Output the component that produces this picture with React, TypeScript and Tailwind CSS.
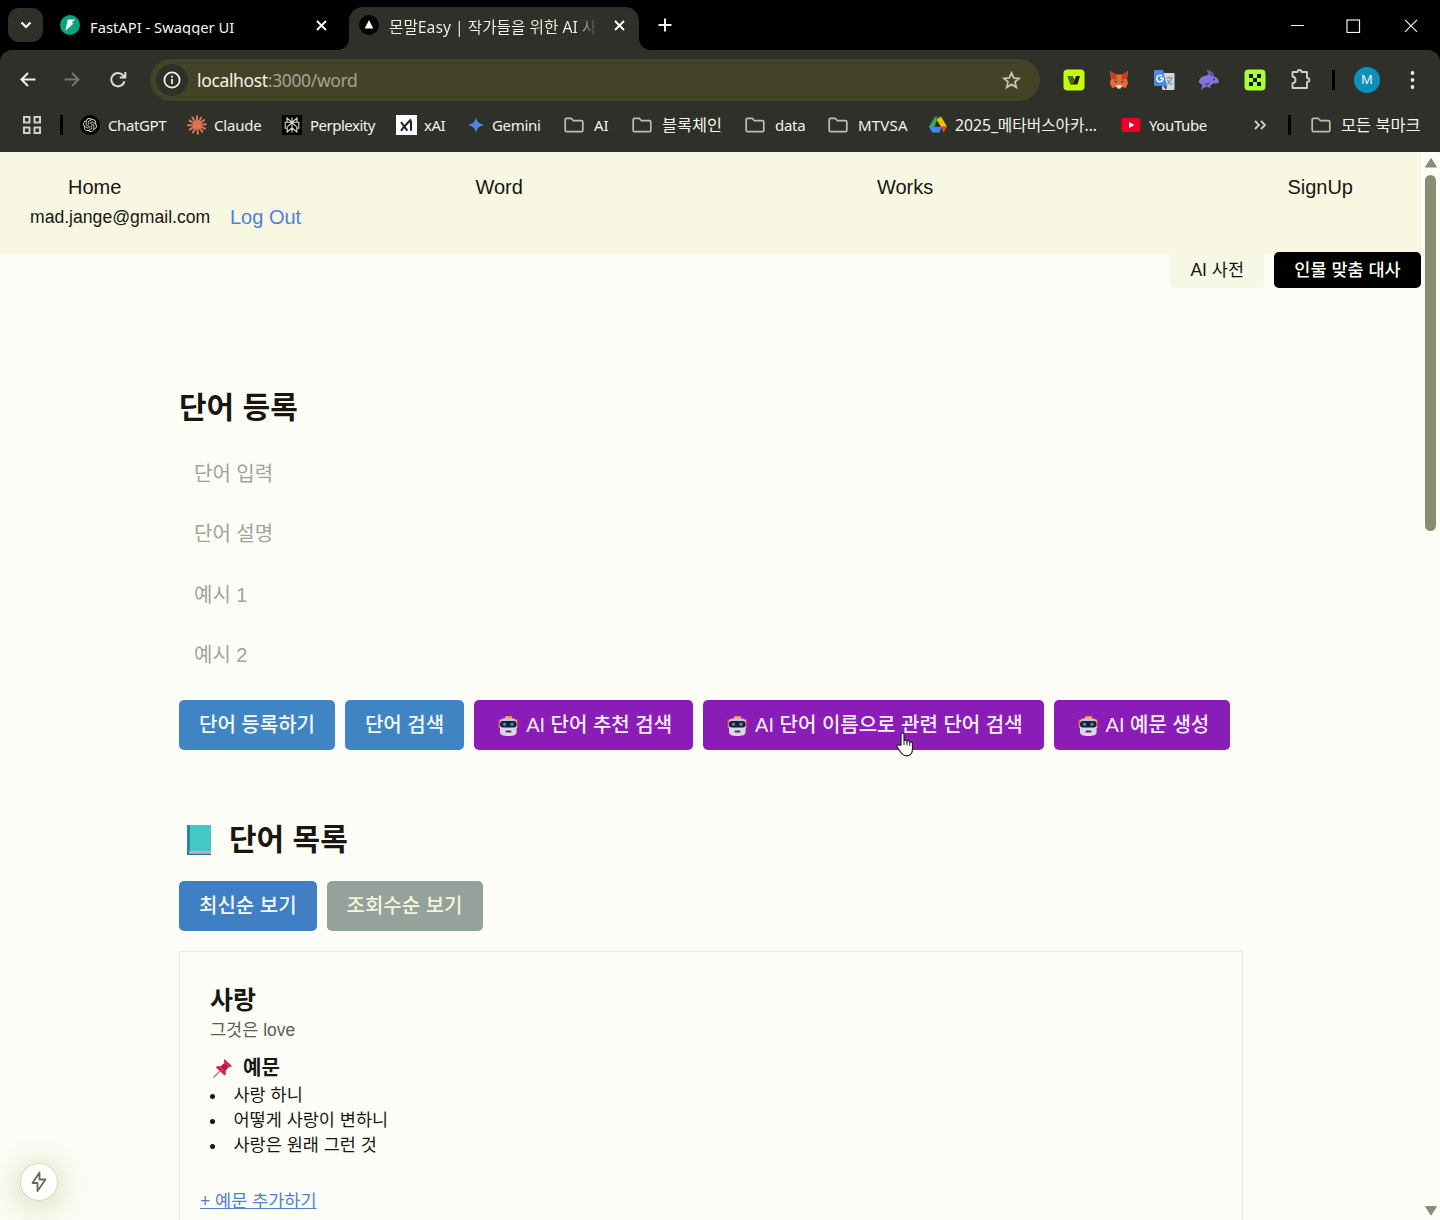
import React from "react";
import { SiOpenai } from "react-icons/si";

const UI = "font-['Noto_Sans','Noto_Sans_CJK_KR',sans-serif]";
const PAGE = "font-['Liberation_Sans','Noto_Sans_CJK_KR',sans-serif]";

function Folder() {
  return (
    <svg width="20" height="20" viewBox="0 0 20 20" fill="none" stroke="#bdbdb4" strokeWidth="1.7">
      <path d="M1.2 4.6c0-.8.6-1.3 1.3-1.3h4.7l2.2 2.4h8c.8 0 1.4.6 1.4 1.3v8.3c0 .8-.6 1.4-1.4 1.4H2.6c-.8 0-1.4-.6-1.4-1.4z" />
    </svg>
  );
}

function Burst() {
  return (
    <svg width="20" height="20" viewBox="0 0 20 20" stroke="#d97757" strokeWidth="2" strokeLinecap="round">
      <path d="M10 10V1.2M10 10l4.2-7.4M10 10l7.3-5M10 10l8.8-.8M10 10l8 3.6M10 10l5.2 6.6M10 10l.9 8.8M10 10l-4 7.4M10 10l-7.3 4.6M10 10L1 10.3M10 10L2.6 5.6M10 10L5.4 2.3" />
    </svg>
  );
}

function Perplexity() {
  return (
    <svg width="20" height="20" viewBox="0 0 20 20" fill="none" stroke="#d8d8ce" strokeWidth="1.1">
      <rect width="20" height="20" fill="#050505" stroke="none" />
      <path d="M10 2.500v15M5 3v4.300h10V3l-5 4.500zM5 7.300H3.200v6h2M15 7.300h1.800v6h-2M10 7.500l-4.800 4.400V17l4.800-4.200 4.800 4.200v-5.100z" />
    </svg>
  );
}

function XaiLogo() {
  return (
    <svg className="shrink-0" width="21" height="20" viewBox="0 0 21 20">
      <rect width="21" height="20" fill="#fff" />
      <path d="M5 7l6.300 8.600M5 15.800l2.700-3.600M9 10.800l6-6.300M15 6v9.800" fill="none" stroke="#222" strokeWidth="2.100" />
    </svg>
  );
}

function Gemini() {
  return (
    <svg width="20" height="20" viewBox="0 0 20 20">
      <defs>
        <linearGradient id="gem" x1="0" x2="1">
          <stop offset="0" stopColor="#8a72c0" />
          <stop offset=".55" stopColor="#4a86e0" />
          <stop offset="1" stopColor="#4fa0e8" />
        </linearGradient>
      </defs>
      <path d="M10 2c.9 4.800 3.200 7.100 8 8-4.800.9-7.100 3.200-8 8-.9-4.800-3.200-7.100-8-8 4.800-.9 7.100-3.200 8-8z" fill="url(#gem)" />
    </svg>
  );
}

function Drive() {
  return (
    <svg width="20" height="20" viewBox="0 0 20 20">
      <path d="M6.800 1.800h3.400L4.500 17.200 1 11.800z" fill="#34a853" />
      <path d="M6.800 1.800h6.400L10 7.500z" fill="#188038" />
      <path d="M13.200 1.800L19 11.800h-6.100L8.600 4.500z" fill="#fbbc04" />
      <path d="M7 11.800h6.500l-1.800 5.700H4.500L1 11.800z" fill="#4285f4" />
      <path d="M12.900 11.800H19l-3.400 5.700z" fill="#ea4335" />
      <path d="M10 7.600l2.500 4.200h-5z" fill="#303029" />
    </svg>
  );
}

function YouTube() {
  return (
    <svg width="20" height="20" viewBox="0 0 20 20">
      <rect x=".5" y="3" width="19" height="14" rx="2" fill="#f00028" />
      <path d="M8 7l5.500 3L8 13z" fill="#fff" />
    </svg>
  );
}

function Bookmark({ icon, label, w, text = "" }: { icon: React.ReactNode; label: string; w: string; text?: string }) {
  return (
    <div className={`flex shrink-0 items-center ${w}`}>
      <span className="flex w-5 shrink-0 justify-center">{icon}</span>
      <span className={`ml-2 whitespace-nowrap ${text}`}>{label}</span>
    </div>
  );
}

function X() {
  return <svg className="shrink-0" width="11" height="11" stroke="#fff" strokeWidth="1.900"><path d="M1 1l9 9M10 1l-9 9" /></svg>;
}

function TabBar() {
  return (
    <div className="flex h-[50px] items-start bg-black text-[#f4f4e8]">
      <div className="ml-2 mt-2 flex h-[34px] w-[35px] items-center justify-center rounded-[11px] bg-[#30302a]">
        <svg width="12" height="8" viewBox="0 0 12 8" fill="none" stroke="#fff" strokeWidth="2.200"><path d="M1.500 1.500L6 6l4.500-4.500" /></svg>
      </div>
      <div className="ml-[17px] mt-[15px] flex w-[289px] items-start">
        <svg className="shrink-0" width="20" height="20" viewBox="0 0 20 20"><circle cx="10" cy="10" r="10" fill="#0ba37f" /><path d="M7.800 4.500h7.200l-3.800 3.700h2.600L5.500 15.800l1-5z" fill="#fff" /></svg>
        <span className="ml-[10px] mt-[2px] h-[18px] w-[226px] shrink-0 overflow-hidden whitespace-nowrap text-[14.750px] leading-[21px]">FastAPI - Swagger UI</span>
        <span className="mt-[5px]"><X /></span>
      </div>
      <div className="relative h-[50px] w-[290px]">
        <div className="mt-[7px] flex h-[43px] items-start rounded-t-[14px] bg-[#30302a] pl-[10px] pt-2">
          <svg className="shrink-0" width="20" height="20" viewBox="0 0 20 20"><circle cx="10" cy="10" r="10" fill="#000" /><path d="M10 5l4.300 8.500H5.700z" fill="#fff" /></svg>
          <span className="ml-[10px] mt-[1px] h-[22px] w-[209px] shrink-0 overflow-hidden whitespace-nowrap bg-gradient-to-r from-[#f4f4e8] from-90% to-[#30302a] bg-clip-text text-[15.700px] leading-[22px] text-transparent">몬말Easy | 작가들을 위한 AI 사</span>
          <span className="ml-[16px] mt-[5px]"><X /></span>
        </div>
        <svg className="absolute -left-[12px] bottom-0" width="12" height="12"><path d="M12 0v12H0C7 12 12 7 12 0z" fill="#30302a" /></svg>
        <svg className="absolute -right-[12px] bottom-0" width="12" height="12"><path d="M0 0v12h12C5 12 0 7 0 0z" fill="#30302a" /></svg>
      </div>
      <svg className="ml-[19px] mt-[18px]" width="14" height="14" stroke="#f4f4e8" strokeWidth="2"><path d="M7 .5v13M.5 7h13" /></svg>
      <svg className="ml-auto mr-[22px] mt-[19px]" width="128" height="14" fill="none" stroke="#f4f4ec" strokeWidth="1.200"><path d="M1 6.500h13M115 .8l12 12M127 .8l-12 12" /><rect x="57" y="1" width="12.500" height="12.500" /></svg>
    </div>
  );
}

function Toolbar() {
  return (
    <div className="bg-black">
      <div className="h-[102px] rounded-t-[12px] bg-[#30302a] text-[#f4f4e8]">
        <div className="flex h-[60px] items-center">
          <svg className="ml-5" width="16" height="16" fill="none" stroke="#f0f0e6" strokeWidth="2"><path d="M15.500 7.500H1.500M8 1L1.500 7.500 8 14" /></svg>
          <svg className="ml-[28px]" width="16" height="16" fill="none" stroke="#77776c" strokeWidth="2"><path d="M.5 7.500h14M8 1l6.500 6.500L8 14" /></svg>
          <svg className="ml-[29px]" width="18" height="18" viewBox="0 0 18 18" fill="none" stroke="#deded2" strokeWidth="2"><path d="M15.500 10.200A6.700 6.700 0 1 1 14 4.200l2 2M16.300 1v5.500h-5.500" /></svg>
          <div className="ml-[23px] flex h-[42px] w-[890px] items-center rounded-full bg-[#434328] pl-[6px] pr-[19px]">
            <span className="flex size-8 items-center justify-center rounded-full bg-[#30302a]">
              <svg width="18" height="18" viewBox="0 0 18 18" fill="none" stroke="#f0f0e6" strokeWidth="1.800"><circle cx="9" cy="9" r="7.600" /><path d="M9 8v5M9 4.700v2" /></svg>
            </span>
            <span className="ml-[9px] text-[17.500px] tracking-[-0.350px] text-[#a4a494]"><span className="text-[#f4f4e8]">localhost</span>:3000/word</span>
            <svg className="ml-auto" width="19" height="19" viewBox="0 0 19 19" fill="none" stroke="#c4c4b8" strokeWidth="1.800"><path d="M9.500 1.900l2.200 5 5.400.5-4.100 3.500 1.300 5.400-4.800-2.900-4.800 2.900L6 10.900 1.900 7.400l5.400-.5z" /></svg>
          </div>
          <svg className="ml-[23px]" width="22" height="22" viewBox="0 0 22 22"><rect x=".5" y=".5" width="21" height="21" rx="4" fill="#c4ff0a" /><path d="M4.500 7h5l2 4 1.500-4H17l-2.500 8.500h-7z" fill="#171d08" /><path d="M4.500 7h5l2.500 5-3 3.500H7.500z" fill="#536600" /></svg>
          <svg className="ml-[24px]" width="20" height="20" viewBox="0 0 20 20"><path d="M1 1l6 3.500h6L19 1l-1 8 1 4-2 5-4-1-3 2-3-2-4 1-2-5 1-4z" fill="#e86a36" /><path d="M1 1l6 3.500 1 5L2 9zM19 1l-6 3.500-1 5L18 9z" fill="#c63d20" /><path d="M7 15h6l-1.500 3.500h-3z" fill="#eadbd0" /><path d="M5 10.500l3 1-1 1.500zM15 10.500l-3 1 1 1.500z" fill="#203050" /></svg>
          <svg className="ml-[24px]" width="22" height="22" viewBox="0 0 22 22"><rect x="9" y="4" width="12.500" height="17" rx="1" fill="#d5d8d8" /><path d="M13 9h7M16.500 7.500V9M18.500 9c-.5 4-3 5.500-5 6.500M14.500 11c1 2 3 4 5 4.500" stroke="#78909c" strokeWidth="1.200" fill="none" /><path d="M1.500 1H10l4 16H2.500C1.500 17 1 16.500 1 15.500V2z" fill="#4d88e8" /><path d="M10 17h4l-1 4z" fill="#3450a0" /><path d="M9 7.200A3.200 3.200 0 1 0 10 9.300H7" stroke="#fff" strokeWidth="1.500" fill="none" /></svg>
          <svg className="ml-[23px]" width="22" height="22" viewBox="0 0 22 22"><path d="M.8 13.500C1 9.500 4 7 8 6.800 12 5 10.500 3 8 1c5 0 8 3 8 6.500 3 .5 4 2.500 5.200 5.500-2 2-4 1.500-6.200 1.500l-3 2.500 1 2c-3-1-5-1.500-7-.5l-3 2.500 1.500-5z" fill="#8276d8" /><path d="M8 1c4 .5 7 3 7.500 6.500L12 7c0-2-1-4-4-6zM6 14.500l7-1.500-4 4.500z" fill="#5d4fb0" /><circle cx="16" cy="10.500" r="1" fill="#302c60" /></svg>
          <svg className="ml-[24px]" width="22" height="22" viewBox="0 0 22 22"><rect x=".5" y=".5" width="21" height="21" rx="4" fill="#aaff30" /><path d="M5 5h4v4H5zM13 5h4v4h-4zM9 9h4v4H9zM5 13h4v4H5zM13 13h4v4h-4z" fill="#101607" /></svg>
          <svg className="ml-[23px]" width="24" height="24" viewBox="0 0 24 24" fill="none" stroke="#d0d0c6" strokeWidth="1.900" strokeLinejoin="round"><path d="M3.500 4h5c0-2.700 4-2.700 4 0H18v6c3.200 0 3.200 4 0 4v6H3.500v-4.500c4-.8 4-6.200 0-7z" /></svg>
          <span className="ml-[19px] h-5 w-[3px] bg-black" />
          <span className="ml-[19px] flex size-[26px] items-center justify-center rounded-full bg-[#0d90bd] text-[13px]">M</span>
          <svg className="ml-[30px]" width="5" height="18" fill="#e6e6dc"><circle cx="2.500" cy="2" r="1.900" /><circle cx="2.500" cy="9" r="1.900" /><circle cx="2.500" cy="16" r="1.900" /></svg>
        </div>
        <div className="flex h-[30px] items-center text-[15px] leading-[24px]">
          <svg className="ml-[23px] shrink-0" width="18" height="18" fill="none" stroke="#d0d0c6" strokeWidth="2"><path d="M1 1h5.500v5.500H1zM11.500 1H17v5.500h-5.500zM1 11.500h5.500V17H1zM11.500 11.500H17V17h-5.500z" /></svg>
          <span className="ml-[19px] mr-[17px] h-5 w-[3px] shrink-0 bg-black" />
          <Bookmark w="w-[107px]" label="ChatGPT" text="tracking-[-0.400px]" icon={<span className="flex size-5 items-center justify-center rounded-full bg-black"><SiOpenai size={14} color="#d4d4ca" /></span>} />
          <Bookmark w="w-[95px]" label="Claude" text="relative -left-px tracking-[-0.200px]" icon={<Burst />} />
          <Bookmark w="w-[114px]" label="Perplexity" text="tracking-[-0.500px]" icon={<Perplexity />} />
          <Bookmark w="w-[70px]" label="xAI" text="tracking-[-0.500px]" icon={<XaiLogo />} />
          <Bookmark w="w-[98px]" label="Gemini" text="relative -left-[2px] tracking-[-0.300px]" icon={<Gemini />} />
          <Bookmark w="w-[68px]" label="AI" text="pl-[2px]" icon={<Folder />} />
          <Bookmark w="w-[113px]" label="블록체인" text="pl-[2px] text-[16.300px]" icon={<Folder />} />
          <Bookmark w="w-[83px]" label="data" text="pl-[2px] tracking-[-0.300px]" icon={<Folder />} />
          <Bookmark w="w-[100px]" label="MTVSA" text="pl-[2px] tracking-[0.200px]" icon={<Folder />} />
          <Bookmark w="w-[193px]" label="2025_메타버스아카..." text="relative -left-px text-[15.700px]" icon={<Drive />} />
          <Bookmark w="w-[133px]" label="YouTube" text="tracking-[-0.400px]" icon={<YouTube />} />
          <svg className="shrink-0" width="12" height="10" fill="none" stroke="#d0d0c6" strokeWidth="1.800"><path d="M1 1l4 4-4 4M7 1l4 4-4 4" /></svg>
          <span className="ml-[22px] mr-[20px] h-5 w-[3px] shrink-0 bg-black" />
          <Bookmark w="w-[112px]" label="모든 북마크" text="pl-[2px] text-[16.400px]" icon={<Folder />} />
        </div>
      </div>
    </div>
  );
}

function Robot() {
  return (
    <svg className="mr-[5px] mt-[2px] shrink-0" width="27" height="22" viewBox="-1 0 27 22">
      <rect x="3" y="4" width="2.500" height="9" rx="1" fill="#d82858" /><rect x="21" y="4" width="2.500" height="9" rx="1" fill="#d82858" />
      <rect x="10" y="1" width="7" height="3" rx="1" fill="#e8a020" />
      <path d="M4.500 7c0-3 3-4 8.800-4s8.800 1 8.800 4v6H4.500z" fill="#c8bed0" />
      <path d="M5 12h16.600v5c0 3-3 4-8.300 4S5 20 5 17z" fill="#dfd5e4" />
      <rect x="5" y="6" width="16.600" height="6.500" rx="3" fill="#182038" />
      <circle cx="9.500" cy="9.300" r="1.800" fill="#3b8ab8" /><circle cx="17" cy="9.300" r="1.800" fill="#3b8ab8" />
      <rect x="10.500" y="15.500" width="6" height="2" rx="1" fill="#453a50" />
    </svg>
  );
}

function Btn({ children, color, ai = false }: { children: React.ReactNode; color: string; ai?: boolean }) {
  return (
    <button className={`flex h-[50px] shrink-0 items-center whitespace-nowrap rounded-[5px] pl-5 text-[20px] leading-[30px] ${ai ? "pr-[21px]" : "pr-5"} ${color}`}>
      {ai && <Robot />}
      {children}
    </button>
  );
}

function Page() {
  const fields = ["단어 입력", "단어 설명", "예시 1", "예시 2"];
  const examples = ["사랑 하니", "어떻게 사랑이 변하니", "사랑은 원래 그런 것"];
  return (
    <div className={`flex h-[1068px] bg-[#fdfdf8] text-[#171710] ${PAGE}`}>
      <div className="w-[1421px] shrink-0">
        <header className="h-[103px] bg-[#f7f7e2] pt-5">
          <nav className="flex justify-between pl-[68px] pr-[68px] text-[20px] leading-[30px]">
            <a>Home</a><a>Word</a><a>Works</a><a>SignUp</a>
          </nav>
          <div className="flex items-center pl-[30px] leading-[30px]">
            <span className="w-[180px] text-[17.600px]">mad.jange@gmail.com</span>
            <a className="ml-5 text-[20px] text-[#4f7fe0]">Log Out</a>
          </div>
        </header>
        <div className="-mt-[3px] flex h-9 justify-end gap-[10px] text-[17.500px] leading-[34px]">
          <button className="rounded-[5px] bg-[#f7f7e6] px-5">AI 사전</button>
          <button className="w-[147px] rounded-[5px] bg-black px-5 font-medium text-[#fdfdee]">인물 맞춤 대사</button>
        </div>
        <main className="ml-[179px] w-[1064px] pt-[98px]">
          <h1 className="text-[30px] font-bold leading-[44px]">단어 등록</h1>
          <div className="mt-[14px] h-[242px] text-[20px] text-[#a3a396]">
            {fields.map((f) => (
              <div key={f} className="flex h-[60.300px] items-center pl-[15px]">{f}</div>
            ))}
          </div>
          <div className="mt-[14px] flex gap-[10px]">
            <Btn color="bg-[#3f85c4] font-medium text-[#f6faf4]">단어 등록하기</Btn>
            <Btn color="bg-[#3f85c4] font-medium text-[#f6faf4]">단어 검색</Btn>
            <Btn ai color="bg-[#8a1cb8] font-medium text-[#f8eefa]">AI 단어 추천 검색</Btn>
            <div className="relative">
              <Btn ai color="bg-[#8a1cb8] font-medium text-[#f8eefa]">AI 단어 이름으로 관련 단어 검색</Btn>
              <svg className="absolute left-[193px] top-[32px]" width="18" height="25" viewBox="0 0 18 25"><path d="M5 13V2.500C5 .5 8 .5 8 2.500V9c.5-1.500 2.800-1 3 .5.600-1.300 2.500-.8 2.800.8.700-1 2.700-.5 2.700 1.500v5c0 4-2 7-6 7-3.500 0-4.800-1.500-6.500-4.500L1.200 15c-.8-1.800 1-3 2.300-1.800z" fill="#fff" stroke="#222" strokeWidth="1.200" /><path d="M8 9v4M11 10v3.500M13.800 11v3" stroke="#222" /></svg>
            </div>
            <Btn ai color="bg-[#8a1cb8] font-medium text-[#f8eefa]">AI 예문 생성</Btn>
          </div>
          <h2 className="mt-[68px] flex h-[44px] items-center text-[30px] font-bold leading-[44px]">
            <svg className="ml-[8px] mr-[17px]" width="25" height="30" viewBox="0 0 25 30"><path d="M0 0h24v26H0z" fill="#43c8c4" /><path d="M0 0h3v27H0z" fill="#278a9e" /><path d="M2 26h22v3H2z" fill="#b9b2c8" /><path d="M0 26v4h24v-1.300H2V26z" fill="#287890" /></svg>
            단어 목록
          </h2>
          <div className="mt-[19px] flex gap-[10px]">
            <Btn color="bg-[#3f80c4] font-medium text-[#f6faf4]">최신순 보기</Btn>
            <Btn color="bg-[#95a29b] font-medium text-[#f6f5dc]">조회수순 보기</Btn>
          </div>
          <section className="mt-5 h-[269px] overflow-hidden border border-b-0 border-[#eaeada] pl-[30px] pt-[31px]">
            <h3 className="text-[25px] font-bold leading-[34px]">사랑</h3>
            <p className="text-[17.500px] leading-[26px] text-[#5c5c50]">그것은 love</p>
            <h4 className="mt-[11px] flex h-[28px] items-center text-[20px] font-bold leading-[28px]">
              <svg className="ml-[3px] mr-[10px]" width="20" height="20" viewBox="0 0 20 20"><path d="M7 13l-6.500 6.500" stroke="#999ba0" strokeWidth="1.700" /><path d="M11.500 1l7.500 7-2.500 1.500-1-.3-2.800 3.400.3 3.400-1.500 1.500L2.800 9.500 4.500 8l3.500.2L11.300 5l-.5-2.500z" fill="#dc275d" /><path d="M8 8.200L11.300 5l3.900 4-2.500 3.600z" fill="#b4174b" /></svg>
              예문
            </h4>
            <ul className="mt-[1px] text-[17.500px] leading-[25.200px]">
              {examples.map((e) => (
                <li key={e} className="flex h-[25.200px] items-center"><span className="mr-[18.500px] mt-[2px] size-[5px] rounded-full bg-[#171710]" />{e}</li>
              ))}
            </ul>
            <a className="-ml-[10px] mt-[29px] block text-[17.500px] leading-[26px] text-[#4f82c8] underline">+ 예문 추가하기</a>
          </section>
        </main>
      </div>
      <div className="flex w-[19px] flex-col items-center pt-[6px]">
        <svg width="12" height="10"><path d="M6 .5L11.500 9H.5z" fill="#8b8b7a" stroke="#8b8b7a" strokeLinejoin="round" /></svg>
        <div className="mt-[7px] h-[356px] w-[11px] rounded-full bg-[#8b8b72]" />
        <svg className="mb-[4px] mt-auto" width="12" height="10"><path d="M6 9L.5 .5h11z" fill="#8b8b7a" stroke="#8b8b7a" strokeLinejoin="round" /></svg>
      </div>
    </div>
  );
}

export default function App() {
  return (
    <div className={`relative h-[1220px] w-[1440px] overflow-hidden bg-[#fdfdf8] ${UI}`}>
      <TabBar />
      <Toolbar />
      <Page />
      <div className="absolute left-[21px] top-[1164px] flex size-9 items-center justify-center rounded-full bg-[#fffffb] shadow-[0_4px_32px_8px_rgba(130,130,20,0.22),0_0_0_1px_#e6e6ce]">
        <svg width="16" height="22" viewBox="0 0 16 22" fill="none" stroke="#68685e" strokeWidth="1.800" strokeLinejoin="round"><path d="M8.500 1.500L1.500 12h5v8l8-11.500h-6z" /></svg>
      </div>
    </div>
  );
}
